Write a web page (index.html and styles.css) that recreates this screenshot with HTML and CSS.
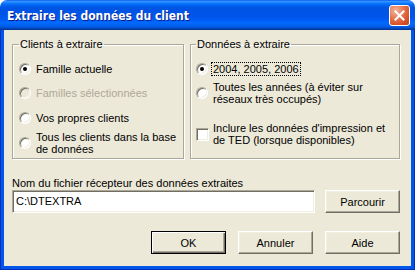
FILE: index.html
```html
<!DOCTYPE html>
<html lang="fr">
<head>
<meta charset="utf-8">
<title>Extraire les données du client</title>
<link rel="stylesheet" href="styles.css">
</head>
<body>
<div class="window">
  <div class="titlebar">
    <span class="title">Extraire les données du client</span>
    <span class="close">
      <svg width="11" height="11" viewBox="0 0 11 11"><path d="M1.5 1.5 L9.5 9.5 M9.5 1.5 L1.5 9.5" stroke="#fff" stroke-width="2" stroke-linecap="square"/></svg>
    </span>
  </div>
  <div class="frame">
    <div class="client">
      <div class="groups">
        <fieldset class="group g1">
          <legend>Clients à extraire</legend>
          <div class="opt r1"><span class="radio checked"></span><span class="txt">Famille actuelle</span></div>
          <div class="opt r2 disabled"><span class="radio"></span><span class="txt">Familles sélectionnées</span></div>
          <div class="opt r3"><span class="radio"></span><span class="txt">Vos propres clients</span></div>
          <div class="opt r4"><span class="radio"></span><span class="txt">Tous les clients dans la base<br>de données</span></div>
        </fieldset>
        <fieldset class="group g2">
          <legend>Données à extraire</legend>
          <div class="opt r1"><span class="radio checked"></span><span class="txt focus">2004, 2005, 2006</span></div>
          <div class="opt r2"><span class="radio"></span><span class="txt">Toutes les années (à éviter sur<br>réseaux très occupés)</span></div>
          <div class="opt r5"><span class="check"></span><span class="txt">Inclure les données d'impression et<br>de TED (lorsque disponibles)</span></div>
        </fieldset>
      </div>
      <div class="file-label">Nom du fichier récepteur des données extraites</div>
      <div class="file-row">
        <div class="input">C:\DTEXTRA</div>
        <span class="btn">Parcourir</span>
      </div>
      <div class="actions">
        <span class="btn default">OK</span>
        <span class="btn">Annuler</span>
        <span class="btn">Aide</span>
      </div>
    </div>
  </div>
</div>
</body>
</html>
```

FILE: styles.css
```css
html, body {
  margin: 0;
  padding: 0;
  background: #ffffff;
}

body {
  font-family: "Liberation Sans", Arial, sans-serif;
  font-size: 11px;
  color: #000;
}

.window {
  width: 415px;
  height: 270px;
  display: flex;
  flex-direction: column;
}

.titlebar {
  height: 30px;
  flex: none;
  box-sizing: border-box;
  border-radius: 7px 7px 0 0;
  background: linear-gradient(to bottom,
    #0058ee 0%, #3a93ff 4%, #288eff 7%, #127dff 10%, #036ffc 14%,
    #0262ee 18%, #0057e5 24%, #0054e3 30%, #0055eb 56%, #005bf5 66%,
    #026afe 76%, #0062ef 86%, #0052d6 92%, #0040ab 96%, #003092 100%);
  display: flex;
  align-items: center;
  justify-content: space-between;
  padding: 0 5px 0 7px;
}

.title {
  color: #fff;
  font-family: "DejaVu Sans Condensed", "DejaVu Sans", sans-serif;
  font-stretch: condensed;
  font-weight: bold;
  font-size: 12px;
  text-shadow: 1px 1px 0 #0a1e8a;
  margin-top: 1px;
}

.close {
  width: 21px;
  height: 21px;
  box-sizing: border-box;
  border: 1px solid #fff;
  border-radius: 3px;
  background: radial-gradient(circle at 30% 25%, #f2b49c 0%, #e4714a 45%, #d2502a 75%, #c1441c 100%);
  display: flex;
  align-items: center;
  justify-content: center;
  margin-top: 1px;
}

.frame {
  flex: 1;
  display: flex;
  background: #0030b8;
  padding: 0 1px 1px 1px;
}

.client {
  flex: 1;
  background: #ece9d8;
  border: solid #0055ea;
  border-width: 0 3px 3px 3px;
  padding: 7px 0 0 8px;
  display: flex;
  flex-direction: column;
}

.groups {
  display: flex;
  gap: 6px;
}

.group {
  margin: 0;
  border: 1px solid #aca899;
  box-shadow: 1px 1px 0 #fff, inset 1px 1px 0 #fff;
  box-sizing: border-box;
  height: 122px;
  padding: 5px 0 0 0;
  min-width: 0;
}

.g1 { width: 172px; padding-left: 6px; }
.g2 { width: 210px; padding-left: 5px; }

.group legend {
  line-height: 15px;
  padding: 0 1px;
  margin-left: 0;
}

.opt {
  display: flex;
  align-items: center;
  line-height: 12px;
}

.g1 .r1 { height: 24px; }
.g1 .r2 { height: 24px; }
.g1 .r3 { height: 25px; }
.g1 .r4 { height: 26px; }

.g2 .r1 { height: 24px; }
.g2 .r2 { height: 24px; }
.g2 .r5 { height: 26px; margin-top: 16px; }

.radio {
  flex: none;
  width: 12px;
  height: 12px;
  box-sizing: border-box;
  border-radius: 50%;
  border: 1px solid;
  border-color: #aca899 #fff #fff #aca899;
  box-shadow: inset 1px 1px 0 #716f64, inset -1px -1px 0 #f1efe2;
  background: #fff;
  position: relative;
  margin-right: 5px;
}

.radio.checked::after {
  content: "";
  position: absolute;
  left: 3px;
  top: 3px;
  width: 4px;
  height: 4px;
  border-radius: 50%;
  background: #000;
}

.disabled .radio { background: #ece9d8; }
.disabled .txt { color: #aca899; }

.check {
  flex: none;
  width: 13px;
  height: 13px;
  box-sizing: border-box;
  border: 1px solid;
  border-color: #aca899 #fff #fff #aca899;
  box-shadow: inset 1px 1px 0 #716f64, inset -1px -1px 0 #f1efe2;
  background: #fff;
  margin-right: 4px;
}

.txt.focus {
  outline: 1px dotted #000;
  outline-offset: 0;
  padding: 0 1px;
  margin-left: -1px;
}

.file-label {
  margin-top: 18px;
  margin-left: 0;
  line-height: 13px;
}

.file-row {
  display: flex;
  gap: 10px;
  height: 23px;
}

.input {
  width: 303px;
  height: 23px;
  box-sizing: border-box;
  border: 1px solid;
  border-color: #aca899 #fff #fff #aca899;
  box-shadow: inset 1px 1px 0 #716f64, inset -1px -1px 0 #f1efe2;
  background: #fff;
  padding-left: 3px;
  line-height: 21px;
}

.btn {
  width: 75px;
  height: 23px;
  box-sizing: border-box;
  display: flex;
  align-items: center;
  justify-content: center;
  background: #ece9d8;
  border: 1px solid;
  border-color: #fff #716f64 #716f64 #fff;
  box-shadow: inset -1px -1px 0 #aca899, inset 1px 1px 0 #f1efe2;
}

.btn.default {
  border-color: #000;
  box-shadow: inset 1px 1px 0 #fff, inset -1px -1px 0 #716f64, inset -2px -2px 0 #aca899;
}

.actions {
  display: flex;
  gap: 12px;
  margin-top: 18px;
  margin-left: 139px;
}
```
